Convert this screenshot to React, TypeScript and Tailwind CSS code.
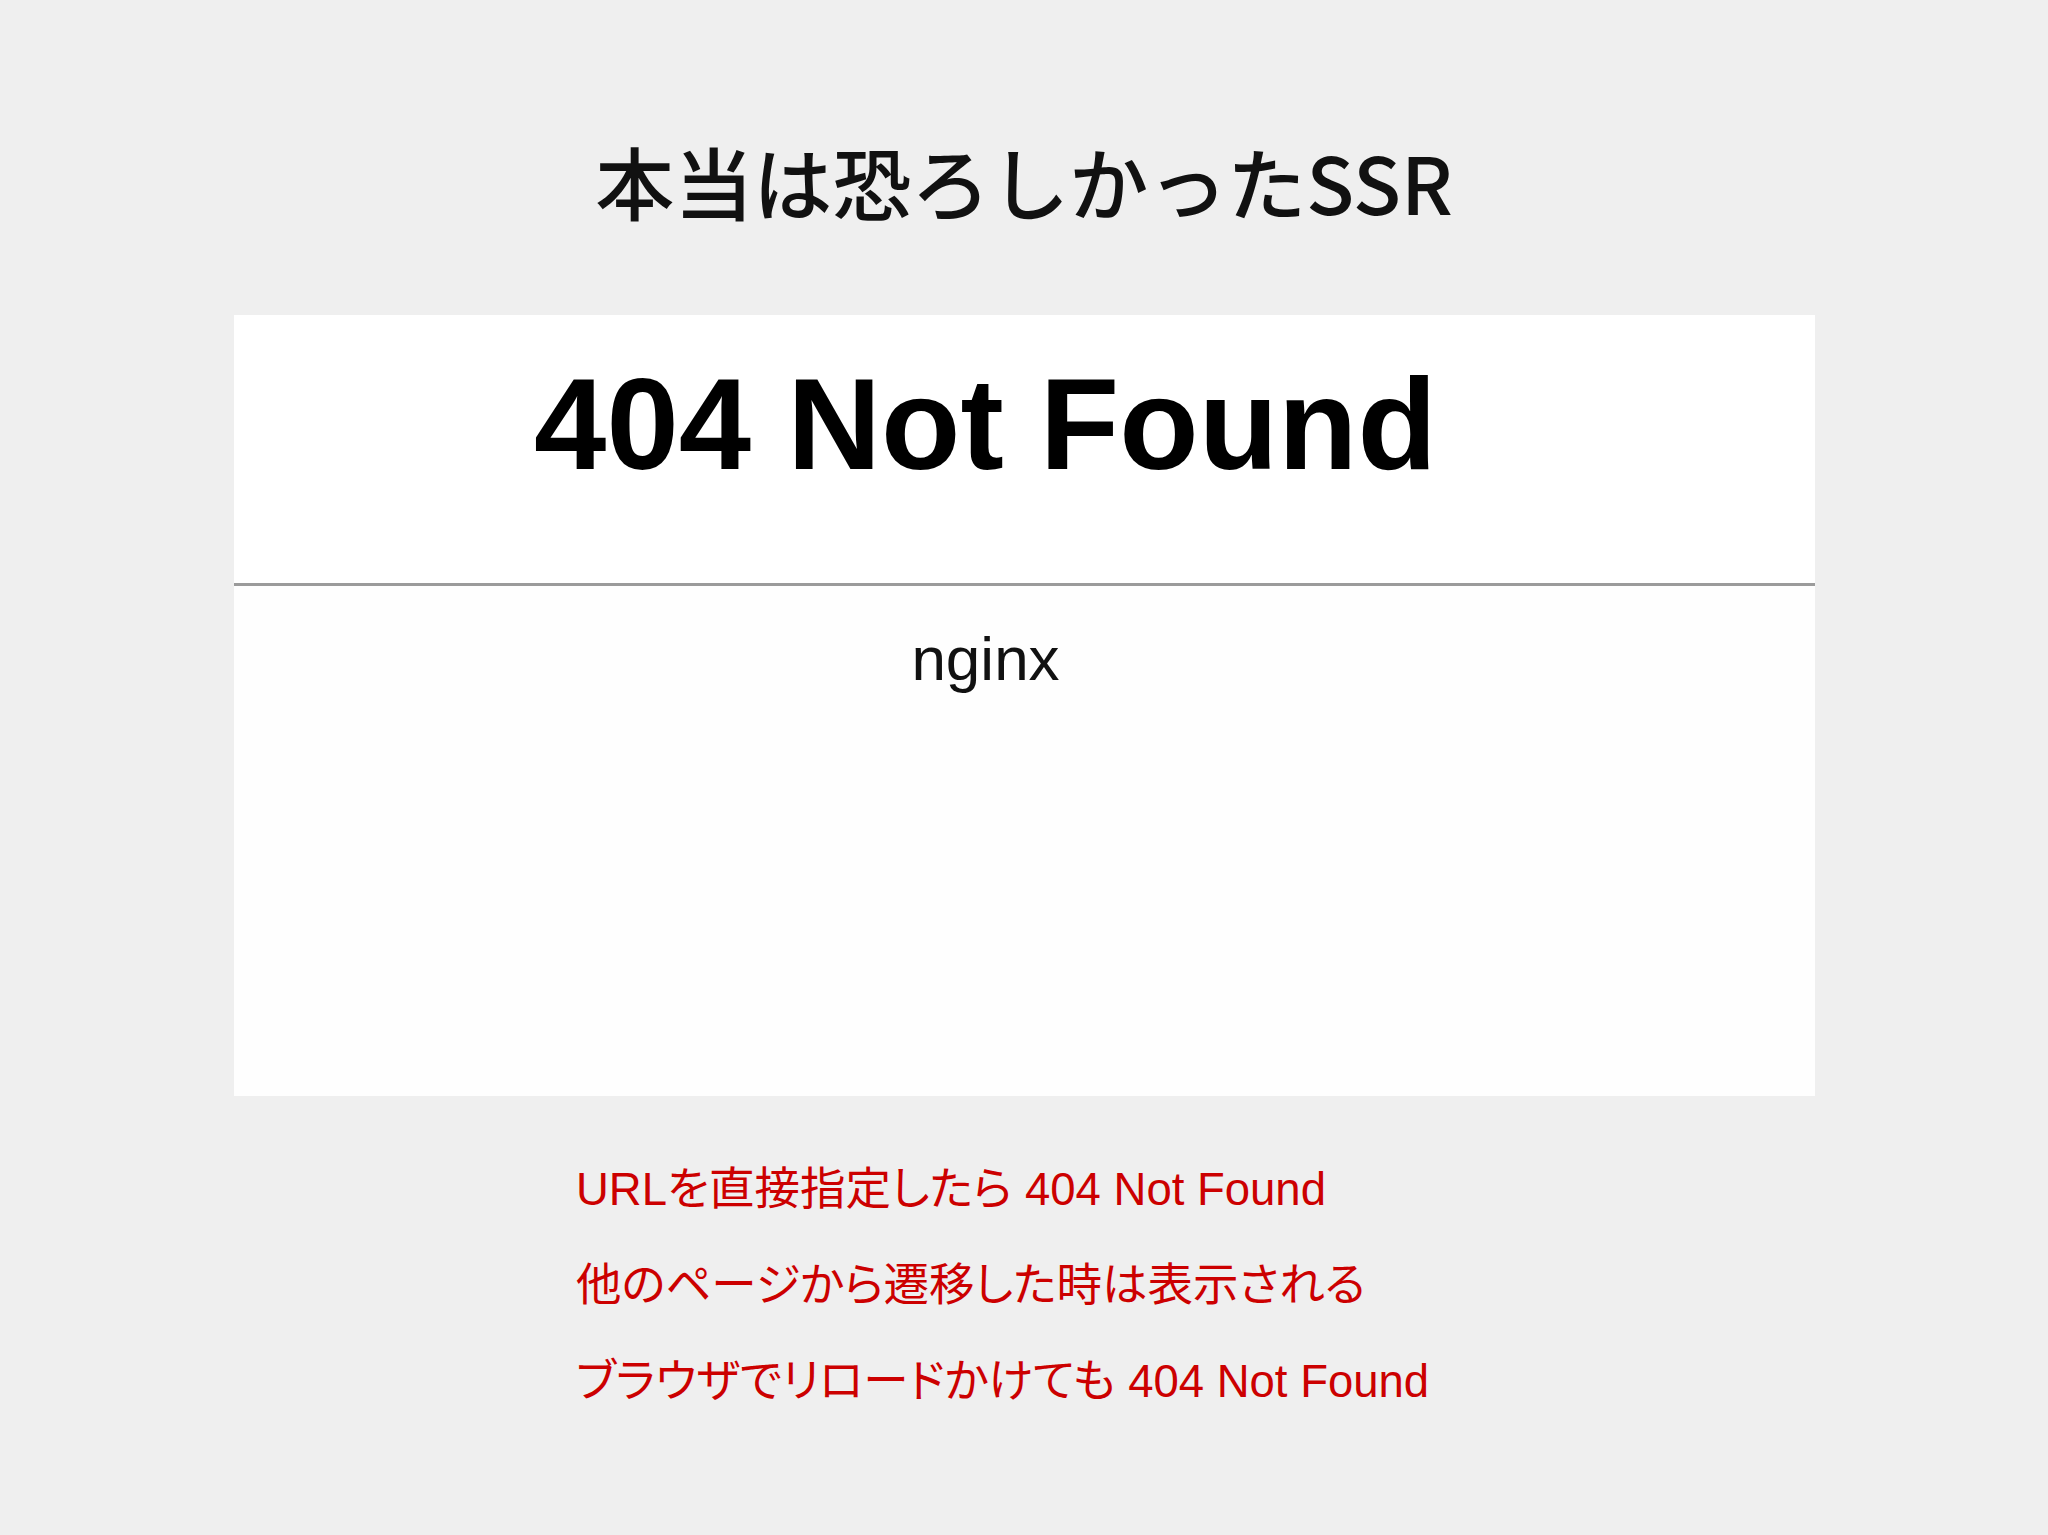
const jp = '"Noto Sans CJK JP", sans-serif';
const mixed = '"Liberation Sans", "Noto Sans CJK JP", sans-serif';

const notes = [
  "URLを直接指定したら 404 Not Found",
  "他のページから遷移した時は表示される",
  "ブラウザでリロードかけても 404 Not Found",
];

function NginxShot() {
  return (
    <div className="w-[1581px] h-[781px] bg-white flex flex-col">
      <div className="h-[268px] pt-[44px] pr-[77px] flex justify-center">
        <h1 className="text-[130px] leading-none font-bold text-black font-['Liberation_Sans',sans-serif]">
          404 Not Found
        </h1>
      </div>
      <div className="h-[3px] bg-[#9b9b9b]" />
      <div className="flex-1 bg-[#fefefe] pt-[42px] pr-[77px] flex justify-center">
        <span className="text-[62px] leading-none text-[#111] font-['Liberation_Sans',sans-serif]">
          nginx
        </span>
      </div>
    </div>
  );
}

export default function App() {
  return (
    <div className="w-[2048px] h-[1535px] bg-[#efefef] flex flex-col items-center overflow-hidden">
      <h2
        className="pt-[141px] text-[79px] leading-none font-medium text-[#111]"
        style={{ fontFamily: jp }}
      >
        本当は恐ろしかったSSR
      </h2>
      <div className="mt-[95px]">
        <NginxShot />
      </div>
      <div className="self-stretch pl-[576px] pt-[46px] flex flex-col">
        {notes.map((n) => (
          <div
            key={n}
            className="h-[96px] leading-[96px] text-[45.5px] text-[#cc0000] whitespace-nowrap [font-feature-settings:'palt']"
            style={{ fontFamily: mixed }}
          >
            {n}
          </div>
        ))}
      </div>
    </div>
  );
}
